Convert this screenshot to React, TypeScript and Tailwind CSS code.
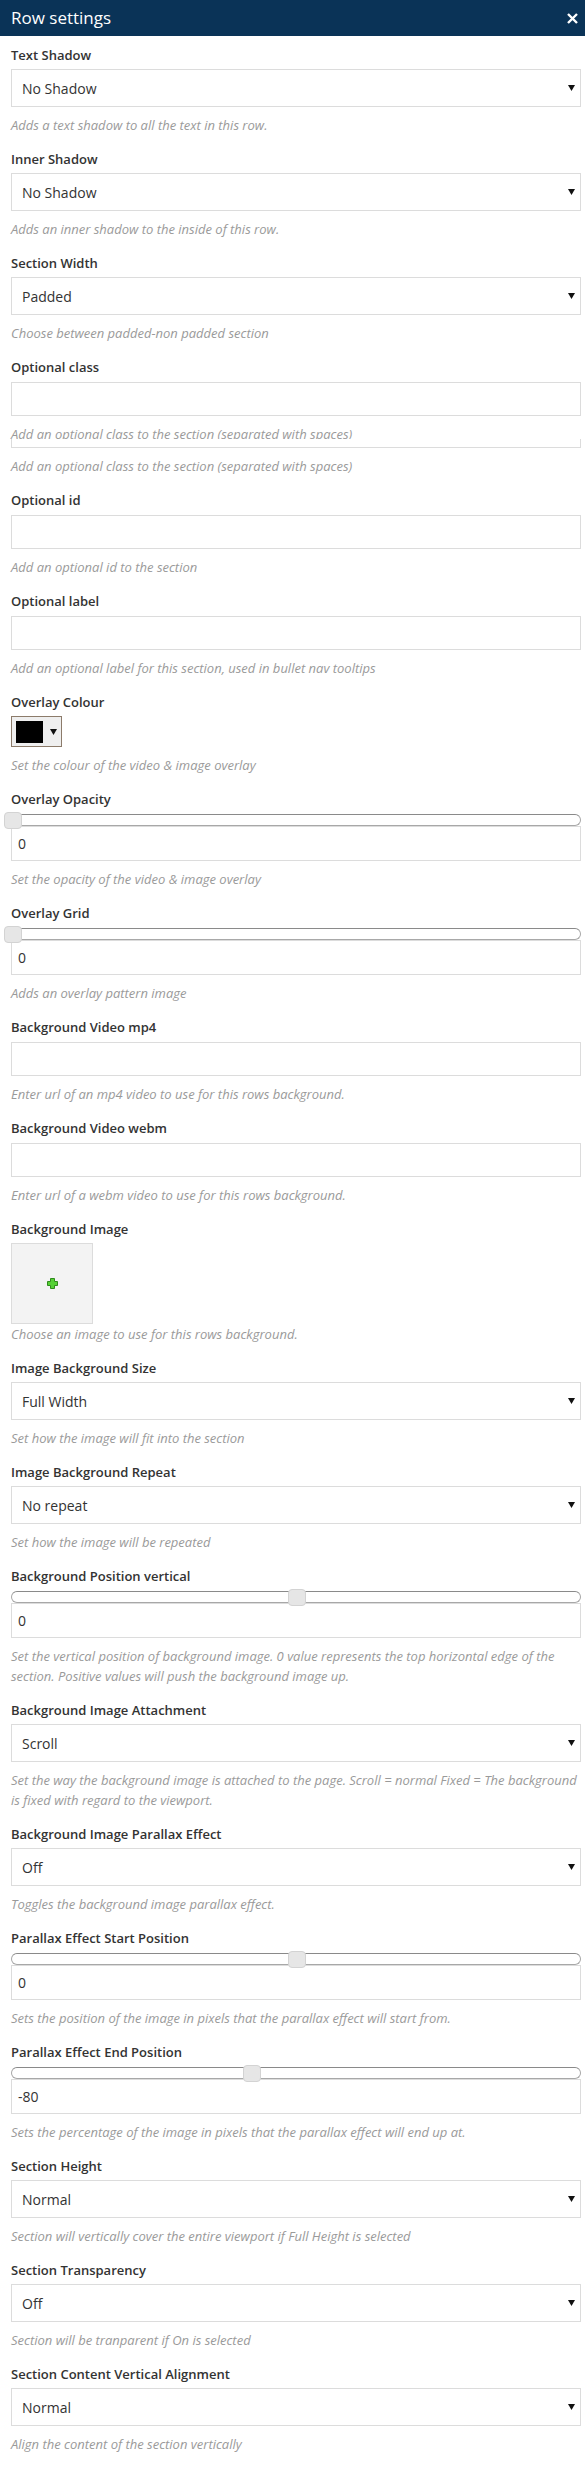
import React from "react";

type Field = {
  label: string;
  kind: "select" | "input" | "color" | "slider" | "image";
  value?: string;
  pct?: number;
  desc: string;
  broken?: boolean;
};

const fields: Field[] = [
  { label: "Text Shadow", kind: "select", value: "No Shadow", desc: "Adds a text shadow to all the text in this row." },
  { label: "Inner Shadow", kind: "select", value: "No Shadow", desc: "Adds an inner shadow to the inside of this row." },
  { label: "Section Width", kind: "select", value: "Padded", desc: "Choose between padded-non padded section" },
  { label: "Optional class", kind: "input", desc: "Add an optional class to the section (separated with spaces)", broken: true },
  { label: "Optional id", kind: "input", desc: "Add an optional id to the section" },
  { label: "Optional label", kind: "input", desc: "Add an optional label for this section, used in bullet nav tooltips" },
  { label: "Overlay Colour", kind: "color", desc: "Set the colour of the video & image overlay" },
  { label: "Overlay Opacity", kind: "slider", value: "0", pct: 0, desc: "Set the opacity of the video & image overlay" },
  { label: "Overlay Grid", kind: "slider", value: "0", pct: 0, desc: "Adds an overlay pattern image" },
  { label: "Background Video mp4", kind: "input", desc: "Enter url of an mp4 video to use for this rows background." },
  { label: "Background Video webm", kind: "input", desc: "Enter url of a webm video to use for this rows background." },
  { label: "Background Image", kind: "image", desc: "Choose an image to use for this rows background." },
  { label: "Image Background Size", kind: "select", value: "Full Width", desc: "Set how the image will fit into the section" },
  { label: "Image Background Repeat", kind: "select", value: "No repeat", desc: "Set how the image will be repeated" },
  {
    label: "Background Position vertical",
    kind: "slider",
    value: "0",
    pct: 50,
    desc: "Set the vertical position of background image. 0 value represents the top horizontal edge of the section. Positive values will push the background image up.",
  },
  {
    label: "Background Image Attachment",
    kind: "select",
    value: "Scroll",
    desc: "Set the way the background image is attached to the page. Scroll = normal Fixed = The background is fixed with regard to the viewport.",
  },
  { label: "Background Image Parallax Effect", kind: "select", value: "Off", desc: "Toggles the background image parallax effect." },
  { label: "Parallax Effect Start Position", kind: "slider", value: "0", pct: 50, desc: "Sets the position of the image in pixels that the parallax effect will start from." },
  { label: "Parallax Effect End Position", kind: "slider", value: "-80", pct: 42, desc: "Sets the percentage of the image in pixels that the parallax effect will end up at." },
  { label: "Section Height", kind: "select", value: "Normal", desc: "Section will vertically cover the entire viewport if Full Height is selected" },
  { label: "Section Transparency", kind: "select", value: "Off", desc: "Section will be tranparent if On is selected" },
  { label: "Section Content Vertical Alignment", kind: "select", value: "Normal", desc: "Align the content of the section vertically" },
];

const Arrow = () => (
  <svg width="7" height="6" viewBox="0 0 7 6">
    <polygon points="0,0 7,0 3.5,6" fill="#111" />
  </svg>
);

const Desc = ({ text, className = "mt-[8px]" }: { text: string; className?: string }) => (
  <p className={`${className} text-[13px] italic leading-[20px] text-[#9a9a9a]`}>{text}</p>
);

const Control = ({ f }: { f: Field }) => {
  if (f.kind === "select") {
    return (
      <div className="mt-[4px] h-[38px] border border-[#dcdcdc] bg-white flex items-center justify-between pl-[10px] pr-[5px] text-[14px] text-[#333]">
        <span>{f.value}</span>
        <Arrow />
      </div>
    );
  }
  if (f.kind === "input") {
    return <div className="mt-[5px] h-[34px] border border-[#dcdcdc] bg-white" />;
  }
  if (f.kind === "color") {
    return (
      <div className="mt-[4px] h-[31px] w-[51px] border border-[#8c7b6a] bg-[#efefef] flex items-center pl-[4px] gap-[7px]">
        <div className="h-[22px] w-[27px] bg-black" />
        <Arrow />
      </div>
    );
  }
  if (f.kind === "image") {
    return (
      <div className="mt-[4px] h-[81px] w-[82px] border border-[#dcdcdc] bg-[#f3f3f3] flex items-center justify-center">
        <svg width="11" height="11" viewBox="0 0 11 11">
          <path d="M3.5 0.5h4v3h3v4h-3v3h-4v-3h-3v-4h3z" fill="#55d135" stroke="#2f8a1c" strokeWidth="1" />
        </svg>
      </div>
    );
  }
  return (
    <div className="mt-[5px]">
      <div className="relative h-[12px] rounded-[6px] border border-[#a8a8a8] border-t-[#8a8a8a] bg-white">
        <div
          className="absolute top-[-3px] h-[17px] w-[18px] ml-[-8px] rounded-[4px] border border-[#d3d3d3] bg-[#e6e6e6]"
          style={{ left: `${f.pct}%` }}
        />
      </div>
      <div className="h-[35px] border border-[#dcdcdc] bg-white flex items-center pl-[6px] text-[14px] text-[#333]">
        {f.value}
      </div>
    </div>
  );
};

export default function App() {
  return (
    <div className="w-[585px] bg-white font-['Open_Sans',sans-serif]">
      {/* header */}
      <div className="h-[36px] bg-[#0a3357] flex items-center justify-between pl-[11px] pr-[7px]">
        <span className="text-[17px] leading-[36px] text-white">Row settings</span>
        <svg width="11" height="11" viewBox="0 0 11 11">
          <path d="M1 1L10 10M10 1L1 10" stroke="#fff" strokeWidth="2.4" />
        </svg>
      </div>

      <div className="pt-[9px] pl-[11px] pr-[4px] pb-[10px] flex flex-col gap-[14px]">
        {fields.map((f) => (
          <div key={f.label}>
            <div className="text-[13px] font-semibold leading-[20px] text-[#333]">{f.label}</div>
            <Control f={f} />
            <Desc text={f.desc} className={f.kind === "image" ? "mt-0" : "mt-[8px]"} />
            {f.broken && (
              <>
                <div className="relative -mt-[5px] h-[9px] border-x border-b border-[#dcdcdc] bg-white" />
                <Desc text={f.desc} />
              </>
            )}
          </div>
        ))}
      </div>
    </div>
  );
}
